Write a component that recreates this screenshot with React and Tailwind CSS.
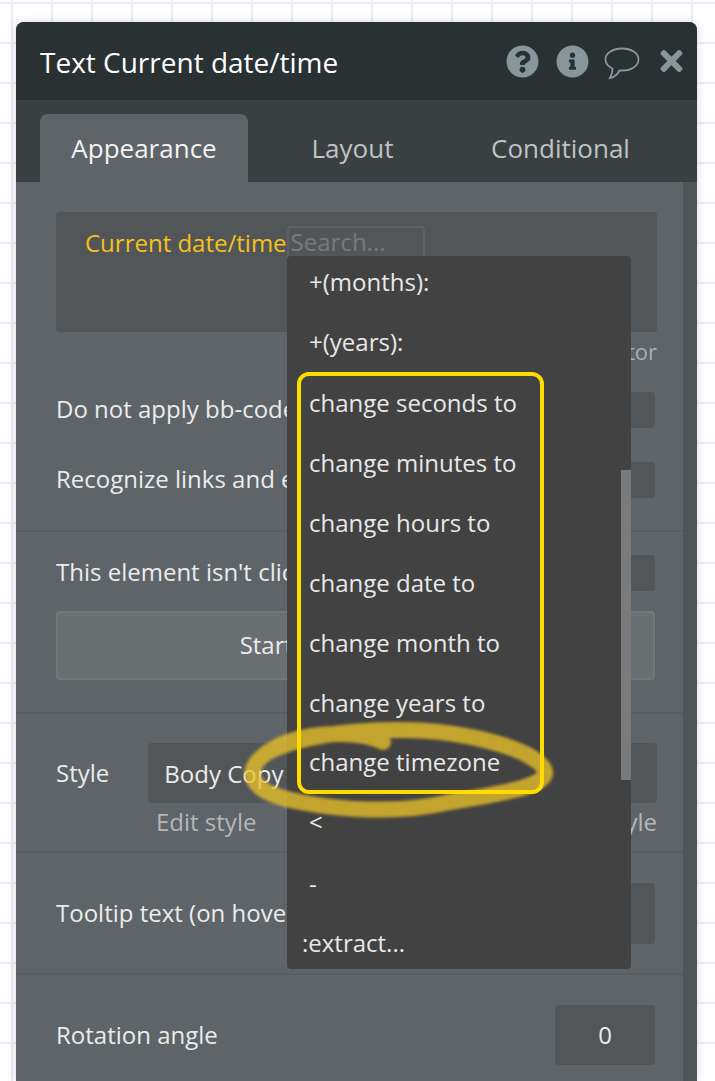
import { FaQuestionCircle, FaInfoCircle, FaTimes } from "react-icons/fa";

const menuItems = [
  { label: "+(months):", className: "h-[60px]" },
  { label: "+(years):", className: "h-[60px]" },
  { label: "change seconds to", className: "h-[60px] pt-[1px]" },
  { label: "change minutes to", className: "h-[60px] pt-[1px]" },
  { label: "change hours to", className: "h-[60px] pt-[1px]" },
  { label: "change date to", className: "h-[60px] pt-[1px]" },
  { label: "change month to", className: "h-[60px] pt-[1px]" },
  { label: "change years to", className: "h-[60px] pt-[1px]" },
  { label: "change timezone", className: "h-[60px] pb-[1px]" },
  { label: "<", className: "h-[60px]" },
  { label: "-", className: "h-[60px] pt-[4px]" },
];

function Row({ label, box }) {
  return (
    <div className="flex items-center justify-between h-9 pr-[2px]">
      <span className="whitespace-nowrap pb-[3px]">{label}</span>
      <div className={`h-9 rounded-sm bg-[#525659] ${box}`} />
    </div>
  );
}

function Section({ className, children }) {
  return <div className={`border-b-2 border-[#585d60] pl-10 pr-[26px] ${className}`}>{children}</div>;
}

export default function App() {
  return (
    <div
      className="relative h-[1081px] overflow-hidden bg-white bg-[linear-gradient(#e9edfb_2px,transparent_2px),linear-gradient(90deg,#e9edfb_2px,transparent_2px)] bg-[size:40px_40px] bg-[position:11px_2px] pt-[22px] pl-4"
      style={{ fontFamily: "'Open Sans',sans-serif" }}
    >
      <div className="relative w-[681px] h-[1059px] overflow-hidden rounded-t-lg bg-[#505558] shadow-[0_0_10px_rgba(0,0,0,0.15)] text-[24px] leading-none text-[#eaecec]">
        {/* header */}
        <div className="flex items-center h-[78px] bg-[#2a3133] pl-[24px] pr-[12px]">
          <span className="text-[28px] text-white whitespace-nowrap pt-[2px]">Text Current date/time</span>
          <div className="ml-auto flex items-center text-[#87969a]">
            <FaQuestionCircle className="w-[33px] h-[33px]" />
            <FaInfoCircle className="w-[33px] h-[33px] ml-[17px]" />
            <svg viewBox="0 0 36 34" className="w-[36px] h-[34px] ml-[15px] mt-[4px]" fill="none" stroke="currentColor" strokeWidth="1.800">
              <path d="M18 2.500C9 2.500 1.500 7 1.500 13.500c0 4 2.500 7 7 9 .2 3.500-.8 6.500-2.500 9.500 4-.8 7.500-3.500 9.500-7.500h2.500c9 0 16.500-4.500 16.500-11S27 2.500 18 2.500z" />
            </svg>
            <FaTimes className="w-[27px] h-[32px] ml-[18px]" />
          </div>
        </div>

        {/* tabs */}
        <div className="flex items-end h-[82px] bg-[#3a3f42] pl-6 text-[26px] text-[#bfc3c4]">
          <div className="flex items-center justify-center w-[208px] h-[68px] rounded-t-lg bg-[#5f6468] text-[#f2f3f3]">Appearance</div>
          <div className="flex items-center justify-center w-[209px] h-[68px]">Layout</div>
          <div className="flex items-center justify-center w-[207px] h-[68px]">Conditional</div>
        </div>

        {/* body */}
        <div className="w-[667px] h-[899px] overflow-hidden bg-[#5f6468]">
          <Section className="pt-[30px] pb-[32px] h-[350px]">
            <div className="h-[120px] rounded-sm bg-[#525659] pl-[29px] pt-[14px] pr-8 flex items-start">
              <span className="text-[#f6c21a] whitespace-nowrap h-[33px] flex items-center">Current date/time</span>
              <div className="w-[138px] h-[34px] rounded border-2 border-[#5c6164] text-[#767b7e] flex items-center pl-[2px] pb-[2px]">Search...</div>
            </div>
            <div className="h-[40px] flex items-center justify-end text-[22px] text-[#a9adaf] pb-[2px]">Open the expression editor</div>
            <div className="mt-5">
              <Row label="Do not apply bb-code" box="w-9" />
            </div>
            <div className="mt-[34px]">
              <Row label="Recognize links and emails" box="w-9" />
            </div>
          </Section>

          <Section className="pt-[23px] h-[182px]">
            <Row label="This element isn't clickable" box="w-9" />
            <button className="mt-5 flex items-center justify-center w-[599px] h-[69px] rounded border-2 border-[#72777a] bg-[#6a6f72] text-[#eaecec] pr-[18px] pb-[2px]">
              Start/Edit workflow
            </button>
          </Section>

          <Section className="pt-[29px] h-[139px]">
            <div className="flex items-center h-[60px]">
              <span className="pb-[1px]">Style</span>
              <div className="ml-[39px] flex items-center w-[509px] h-[60px] rounded-sm bg-[#525659] pl-4 pt-[2px]">Body Copy</div>
            </div>
            <div className="flex justify-between h-[38px] items-center pl-[100px] text-[#b3b7b9]">
              <span>Edit style</span>
              <span>Create a new style</span>
            </div>
          </Section>

          <Section className="pt-[30px] h-[122px]">
            <div className="flex items-center justify-between h-[61px] pr-[2px]">
              <span className="whitespace-nowrap pb-[2px]">Tooltip text (on hover)</span>
              <div className="w-[360px] h-[61px] rounded-sm bg-[#525659]" />
            </div>
          </Section>

          <div className="pl-10 pr-[28px] pt-[30px]">
            <div className="flex items-center justify-between h-[60px]">
              <span className="pb-[1px]">Rotation angle</span>
              <div className="flex items-center justify-center w-[100px] h-[60px] rounded-sm bg-[#525659]">0</div>
            </div>
          </div>
        </div>
      </div>

      {/* search dropdown */}
      <div className="absolute left-[287px] top-[256px] w-[344px] h-[713px] rounded-sm bg-[#424242] text-[24px] leading-none text-[#e8e8e8]">
        <div className="pl-[22px] -mt-1">
          {menuItems.map((item) => (
            <div key={item.label} className={`flex items-center ${item.className}`}>{item.label}</div>
          ))}
        </div>
        <div className="flex items-center h-[60px] pl-[15px] pt-[3px] -mt-[1px]">:extract...</div>
        <div className="absolute right-0 top-[214px] w-[10px] h-[310px] bg-[#7a7a7a]" />
      </div>

      {/* hand drawn circle */}
      <svg className="absolute inset-0 w-[715px] h-[1081px] pointer-events-none blur-[1.5px]" viewBox="0 0 715 1081" fill="none">
        <path
          d="M383 742C360 730 300 730 268 752C242 770 246 792 300 802C340 810 400 814 450 802C500 794 547 786 545 772C542 752 470 730 400 730C350 730 300 736 268 752"
          stroke="#e8c02a"
          strokeOpacity="0.78"
          strokeWidth="16"
          strokeLinecap="round"
        />
      </svg>

      {/* callout box */}
      <div className="absolute left-[297px] top-[372px] w-[247px] h-[422px] rounded-[12px] border-[4px] border-[#ffdc00]" />
    </div>
  );
}
